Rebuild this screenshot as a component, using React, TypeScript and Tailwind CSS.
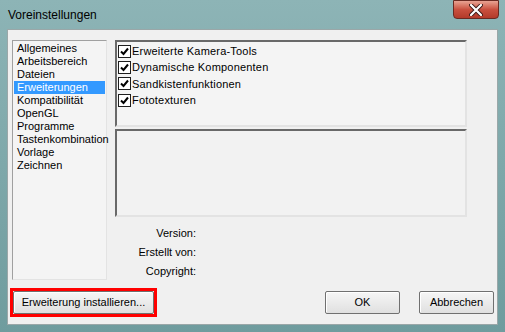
const categories = [
  'Allgemeines',
  'Arbeitsbereich',
  'Dateien',
  'Erweiterungen',
  'Kompatibilität',
  'OpenGL',
  'Programme',
  'Tastenkombination',
  'Vorlage',
  'Zeichnen',
];

const extensions = [
  'Erweiterte Kamera-Tools',
  'Dynamische Komponenten',
  'Sandkistenfunktionen',
  'Fototexturen',
];

function CheckBox() {
  return (
    <span className="flex h-[13px] w-[13px] shrink-0 items-center justify-center border border-[#1e1e1e] bg-white">
      <svg width="9" height="9" viewBox="0 0 9 9">
        <path d="M1 4.5 L3.5 7 L8 1.5" stroke="#000" strokeWidth="2" fill="none" />
      </svg>
    </span>
  );
}

function Button({ label, width }: { label: string; width: string }) {
  return (
    <div
      className={`flex h-[23px] ${width} items-center justify-center rounded-[2px] border border-[#707070] bg-gradient-to-b from-[#f6f6f6] to-[#e0e0e0] text-[11px] text-black shadow-[inset_1px_1px_0_#fff]`}
    >
      {label}
    </div>
  );
}

export default function App() {
  return (
    <div
      className="flex h-[332px] w-[505px] flex-col bg-gradient-to-b from-[#8db4b6] to-[#6f9c9e] px-[7px] pb-[7px]"
      style={{ fontFamily: '"Liberation Sans", Arial, sans-serif' }}
    >
      <div className="relative flex h-[29px] items-center">
        <span className="pl-[1px] text-[12px] text-black">Voreinstellungen</span>
        <div className="absolute right-[-1px] top-0 flex h-[19px] w-[46px] items-center justify-center rounded-b-[4px] border border-[#6a2a22] bg-gradient-to-b from-[#e8a393] via-[#c9503f] to-[#b33a2a]">
          <svg width="14" height="12" viewBox="0 0 14 12">
            <path d="M2 1 L12 11 M12 1 L2 11" stroke="#3b1a16" strokeWidth="4" strokeLinecap="round" />
            <path d="M2 1 L12 11 M12 1 L2 11" stroke="#fff" strokeWidth="2.2" strokeLinecap="round" />
          </svg>
        </div>
      </div>

      <div className="flex flex-1 flex-col border border-[#9aa7a8] bg-[#f0f0f0] text-[11px] text-black">
        <div className="flex gap-[8px] pl-[4px] pt-[10px]">
          <div className="h-[240px] w-[95px] border border-t-[#a0a0a0] border-l-[#a0a0a0] border-b-[#e3e3e3] border-r-[#e3e3e3] bg-[#f4f4f4] p-[1px]">
            {categories.map((c) => (
              <div
                key={c}
                className={`h-[13px] pl-[3px] leading-[13px] ${c === 'Erweiterungen' ? 'bg-[#3399ff] text-white' : ''}`}
              >
                {c}
              </div>
            ))}
          </div>

          <div className="flex w-[352px] flex-col gap-[2px]">
            <div className="h-[87px] border-2 border-t-[#696969] border-l-[#696969] border-b-[#e3e3e3] border-r-[#e3e3e3] bg-[#f4f4f4] pl-[1px] pt-[1px]">
              {extensions.map((e) => (
                <div key={e} className="flex h-[16.3px] items-center gap-[1px]">
                  <CheckBox />
                  <span className="tracking-[0.2px]">{e}</span>
                </div>
              ))}
            </div>
            <div className="h-[88px] border-2 border-t-[#696969] border-l-[#696969] border-b-[#e3e3e3] border-r-[#e3e3e3] bg-[#f2f2f2]" />
            <div className="mt-[5px] flex w-[81px] flex-col text-right leading-[19px]">
              <span>Version:</span>
              <span>Erstellt von:</span>
              <span>Copyright:</span>
            </div>
          </div>
        </div>

        <div className="mt-[7px] flex items-center pl-[2px]">
          <div className="border-[3px] border-[#ff0000]">
            <Button label="Erweiterung installieren..." width="w-[141px]" />
          </div>
          <div className="ml-[168px]">
            <Button label="OK" width="w-[75px]" />
          </div>
          <div className="ml-[19px]">
            <Button label="Abbrechen" width="w-[75px]" />
          </div>
        </div>
      </div>
    </div>
  );
}
